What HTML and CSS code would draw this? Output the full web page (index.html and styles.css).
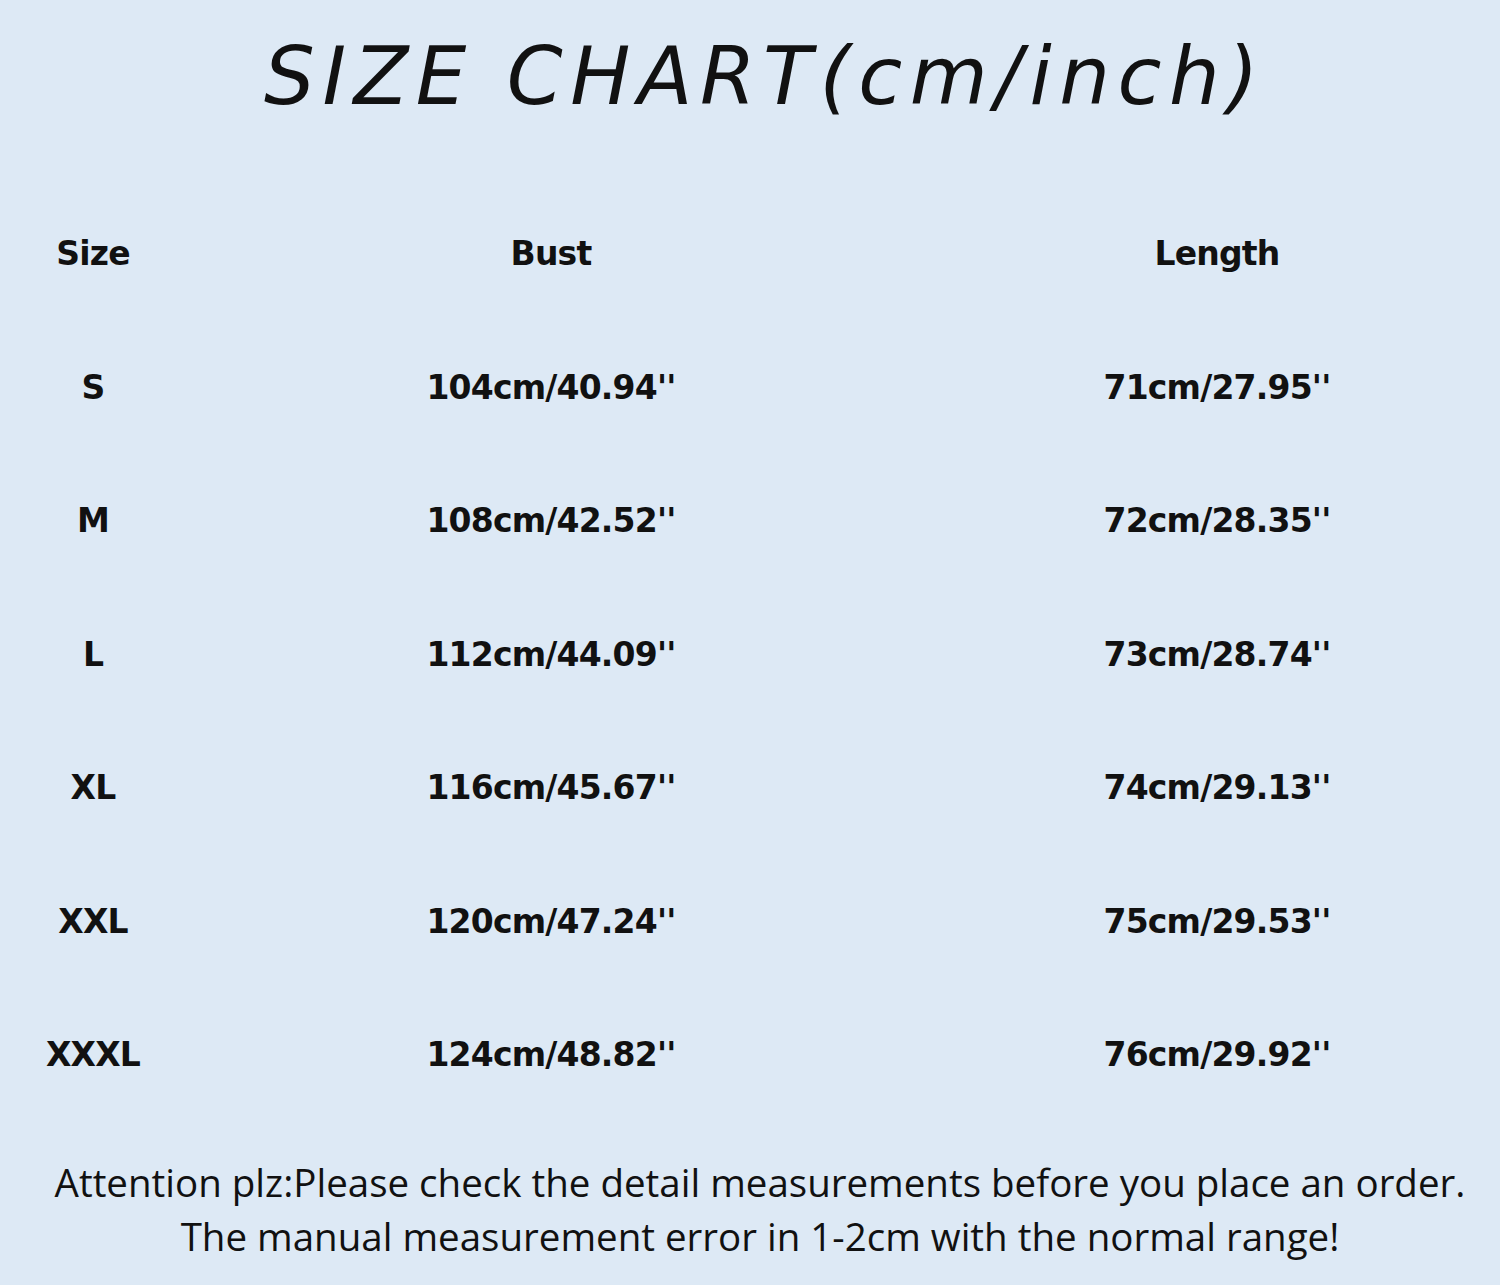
FILE: index.html
```html
<!DOCTYPE html>
<html>
<head>
<meta charset="utf-8">
<link rel="stylesheet" href="styles.css">
</head>
<body>
<div class="page">
  <h1 class="title">SIZE CHART(cm/inch)</h1>
  <div class="chart">
    <div class="cell c1 head">Size</div><div class="cell c2 head">Bust</div><div class="cell c3 head">Length</div>
    <div class="cell c1">S</div><div class="cell c2">104cm/40.94''</div><div class="cell c3">71cm/27.95''</div>
    <div class="cell c1">M</div><div class="cell c2">108cm/42.52''</div><div class="cell c3">72cm/28.35''</div>
    <div class="cell c1">L</div><div class="cell c2">112cm/44.09''</div><div class="cell c3">73cm/28.74''</div>
    <div class="cell c1">XL</div><div class="cell c2">116cm/45.67''</div><div class="cell c3">74cm/29.13''</div>
    <div class="cell c1">XXL</div><div class="cell c2">120cm/47.24''</div><div class="cell c3">75cm/29.53''</div>
    <div class="cell c1">XXXL</div><div class="cell c2">124cm/48.82''</div><div class="cell c3">76cm/29.92''</div>
  </div>
  <div class="note">
    <p>Attention plz:Please check the detail measurements before you place an order.</p>
    <p>The manual measurement error in 1-2cm with the normal range!</p>
  </div>
</div>
</body>
</html>
```

FILE: styles.css
```css
html, body {
  margin: 0;
  padding: 0;
  background: #dde9f5;
}
.page {
  width: 1500px;
  height: 1285px;
  overflow: hidden;
  background: #dde9f5;
  color: #111;
  display: flex;
  flex-direction: column;
}
.title {
  margin: 0;
  padding-top: 22px;
  height: 120px;
  text-align: center;
  font-family: "DejaVu Sans", sans-serif;
  font-weight: normal;
  font-style: italic;
  font-size: 80px;
  line-height: 110px;
  letter-spacing: 7.5px;
  padding-left: 30px;
}
.chart {
  display: grid;
  grid-template-columns: 186px 730px 584px;
  grid-auto-rows: 133.5px;
  margin-top: 92px;
}
.cell {
  font-family: "DejaVu Sans", sans-serif;
  font-weight: bold;
  font-size: 33px;
  line-height: 40px;
  text-align: center;
  letter-spacing: -0.8px;
}
.c3 {
  padding-left: 18px;
}
.note {
  margin-top: -14px;
  text-align: center;
  font-family: "Open Sans", sans-serif;
  font-size: 38.5px;
  line-height: 54px;
  padding-left: 20px;
}
.note p {
  margin: 0;
}
```
